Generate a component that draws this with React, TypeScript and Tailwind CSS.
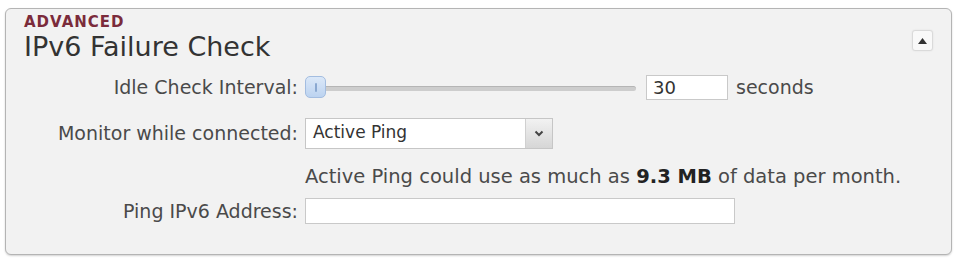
import React, { useState } from "react";

const font = { fontFamily: '"DejaVu Sans", Verdana, sans-serif' };

export default function App() {
  const [interval, setInterval_] = useState("30");
  const [monitor, setMonitor] = useState("Active Ping");
  const [address, setAddress] = useState("");

  return (
    <div className="w-[956px] h-[259px] bg-white pt-[8px] pl-[5px]" style={font}>
      <div className="w-[947px] h-[247px] bg-[#f2f2f2] border border-[#b4b4b4] rounded-[6px] shadow-[0_1px_2px_rgba(0,0,0,0.18)] relative">
        {/* header */}
        <div className="pl-[18px] pt-[5px]">
          <div className="text-[15px] leading-[17px] font-bold text-[#7b2b3b] tracking-[1px]">ADVANCED</div>
          <div className="text-[27px] leading-[30px] text-[#333] mt-[1px]">IPv6 Failure Check</div>
        </div>
        <button className="absolute right-[18px] top-[21px] w-[21px] h-[21px] rounded-[3px] border border-[#dadada] bg-[#f9f9f9] shadow-[0_0_2px_rgba(0,0,0,0.08)] flex items-center justify-center">
          <svg width="9" height="6" viewBox="0 0 9 6">
            <path d="M0 6 L4.5 0 L9 6 Z" fill="#333" />
          </svg>
        </button>

        {/* form rows */}
        <div className="grid grid-cols-[292px_1fr] gap-x-[7px] items-center text-[19px] text-[#4a4a4a] mt-[3px]">
          <label className="text-right h-[44px] leading-[44px]">Idle Check Interval:</label>
          <div className="flex items-center h-[44px]">
            <div className="relative w-[331px] h-[22px] flex items-center">
              <div className="w-full h-[5px] bg-[#cdcdcd] rounded-[3px] border-t border-[#b5b5b5] mt-[3px]" />
              <div className="absolute left-0 top-0 w-[21px] h-[22px] rounded-[5px] bg-gradient-to-b from-[#dbe8f8] to-[#bcd3f0] border border-[#a3bde0] flex items-center justify-center">
                <div className="w-[2px] h-[9px] bg-[#8aa8d0] rounded-[1px]" />
              </div>
            </div>
            <input
              value={interval}
              onChange={(e) => setInterval_(e.target.value)}
              className="ml-[10px] w-[82px] h-[25px] bg-white border border-[#c9c9c9] px-[6px] text-[18px] text-[#333] outline-none"
              style={font}
            />
            <span className="ml-[8px]">seconds</span>
          </div>

          <label className="text-right h-[48px] leading-[48px]">Monitor while connected:</label>
          <div className="flex items-center h-[48px]">
            <div className="w-[248px] h-[31px] bg-white border border-[#c6c6c6] flex items-center">
              <span className="flex-1 pl-[7px] text-[17px] text-[#333]">{monitor}</span>
              <div
                className="w-[27px] h-full border-l border-[#d0d0d0] bg-gradient-to-b from-[#f2f2f2] to-[#d6d6d6] flex items-center justify-center cursor-pointer"
                onClick={() => setMonitor(monitor === "Active Ping" ? "Off" : "Active Ping")}
              >
                <svg width="10" height="7" viewBox="0 0 10 7">
                  <path d="M1.5 1.5 L5 5 L8.5 1.5" stroke="#444" strokeWidth="2" fill="none" />
                </svg>
              </div>
            </div>
          </div>

          <div />
          <div className="h-[40px] leading-[40px] text-[19.5px] whitespace-nowrap">
            Active Ping could use as much as <b className="text-[#222]">9.3 MB</b> of data per month.
          </div>

          <label className="text-right h-[28px] leading-[28px]">Ping IPv6 Address:</label>
          <div className="flex items-center h-[28px]">
            <input
              value={address}
              onChange={(e) => setAddress(e.target.value)}
              className="w-[430px] h-[26px] bg-white border border-[#c9c9c9] px-[6px] text-[16px] outline-none"
              style={font}
            />
          </div>
        </div>
      </div>
    </div>
  );
}
